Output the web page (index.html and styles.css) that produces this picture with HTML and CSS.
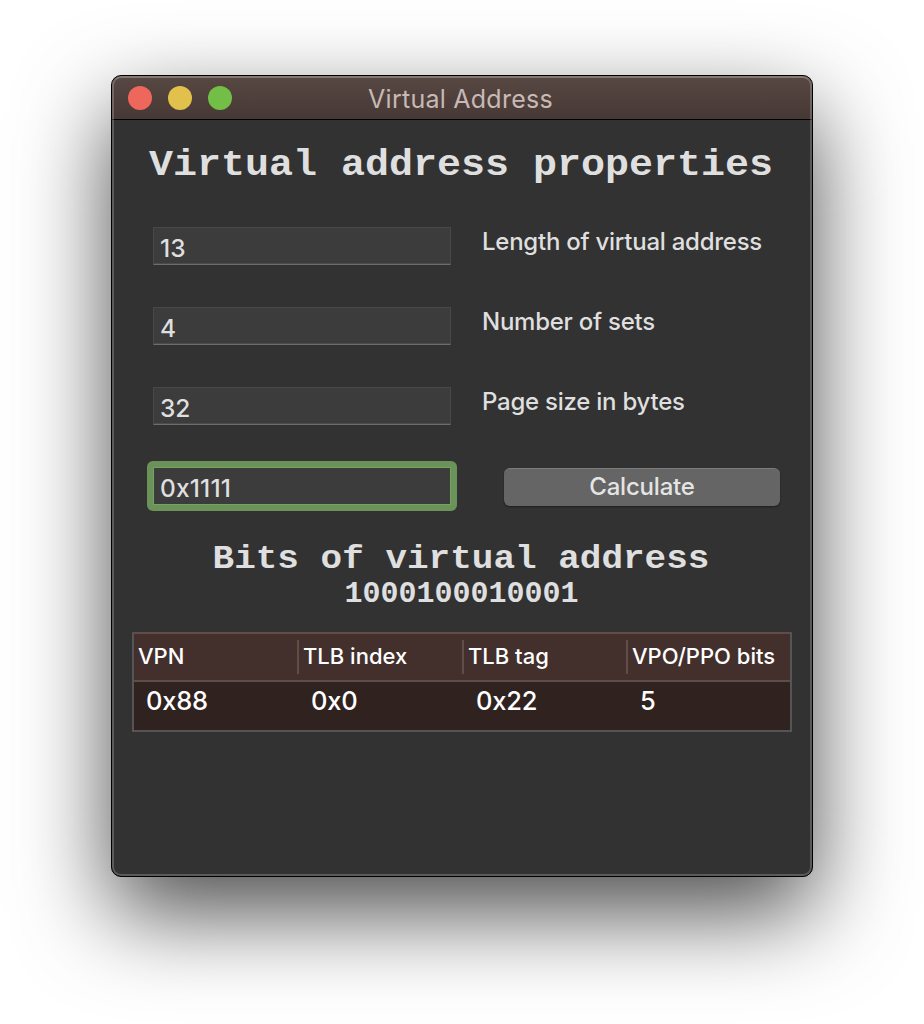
FILE: index.html
```html
<!DOCTYPE html>
<html lang="en">
<head>
<meta charset="utf-8">
<title>Virtual Address</title>
<link rel="stylesheet" href="styles.css">
</head>
<body>
<div class="window">
  <header class="titlebar">
    <div class="lights"><span class="light close"></span><span class="light minimize"></span><span class="light zoom"></span></div>
    <span class="title">Virtual Address</span>
  </header>
  <main class="content">
    <h1 class="heading">Virtual address properties</h1>
    <form class="form">
      <div class="row"><input class="field" type="text" value="13"><label class="label">Length of virtual address</label></div>
      <div class="row"><input class="field" type="text" value="4"><label class="label">Number of sets</label></div>
      <div class="row"><input class="field" type="text" value="32"><label class="label">Page size in bytes</label></div>
      <div class="row"><span class="ring"><input class="field focused" type="text" value="0x1111"></span><button class="button" type="button">Calculate</button></div>
    </form>
    <h2 class="subheading">Bits of virtual address</h2>
    <p class="bits">1000100010001</p>
    <div class="table">
      <div class="thead"><span class="th">VPN</span><span class="th">TLB index</span><span class="th">TLB tag</span><span class="th last">VPO/PPO bits</span></div>
      <div class="tbody"><span class="td">0x88</span><span class="td">0x0</span><span class="td">0x22</span><span class="td">5</span></div>
    </div>
  </main>
</div>
</body>
</html>
```
FILE: styles.css
```css
* { box-sizing: border-box; }
html, body { margin: 0; height: 100%; overflow: hidden; background: #fff; }
body {
  padding: 75px 111px;
  font-family: Inter, "Liberation Sans", sans-serif;
  color: #dfdfdf;
}
.window {
  position: relative;
  width: 702px;
  height: 802px;
  border: 1px solid #000;
  border-radius: 10px;
  background: #323232;
  overflow: hidden;
  box-shadow: 0 36px 92px rgba(0, 0, 0, .7);
}
/* inner rim light drawn over the title bar and body */
.window::after {
  content: "";
  position: absolute;
  inset: 0;
  border: 2px solid rgba(255, 255, 255, .2);
  border-top-color: rgba(255, 255, 255, .27);
  border-radius: 9px;
  pointer-events: none;
}
.titlebar {
  display: grid;
  grid-template-columns: 120px 1fr 120px;
  align-items: center;
  height: 44px;
  padding: 1px 0 0 16px;
  border-bottom: 1px solid #000;
  background: linear-gradient(#584844, #463834);
}
.lights { display: flex; gap: 16px; }
.light { width: 24px; height: 24px; border-radius: 50%; }
.close { background: #ee675c; }
.minimize { background: #e1c04c; }
.zoom { background: #72be47; }
.title {
  text-align: center;
  font-size: 25px;
  line-height: 30px;
  letter-spacing: .25px;
  color: #c7b9b5;
  white-space: nowrap;
  padding: 2px 19px 0 0;
}
.content { padding: 0 20px; }
.heading, .subheading, .bits {
  margin: 0 2px 0 0;
  font-family: "Liberation Mono", monospace;
  font-weight: 700;
  text-align: center;
  white-space: nowrap;
}
/* flattened letterforms keep the wide typewriter proportions */
.heading, .subheading { transform: scaleY(.9); transform-origin: 50% 100%; }
.heading { padding-top: 21px; font-size: 40px; line-height: 46px; }
.form { padding: 40px 0 0 21px; display: grid; grid-auto-rows: 80px; }
.row { display: flex; align-items: flex-start; }
.field {
  display: block;
  width: 298px;
  height: 38px;
  padding: 3px 6px 0;
  border: 1px solid #484848;
  border-bottom: 1px solid #6d6d6d;
  border-radius: 0;
  background: #3c3c3c;
  color: #dfdfdf;
  font: 500 24.5px/32px Inter, sans-serif;
  outline: 0;
  box-shadow: inset 0 -1px #4b4b4b;
}
.ring { margin: -6px; padding: 6px; border-radius: 6px; background: #6b9259; }
.focused { border-color: #72a65c; box-shadow: none; letter-spacing: .15px; }
.label { margin-left: 31px; font-size: 24px; font-weight: 500; letter-spacing: -.25px; line-height: 29px; white-space: nowrap; }
.button {
  width: 276px;
  height: 38px;
  margin: 1px 0 0 53px;
  padding: 0 0 2px;
  border: 0;
  border-radius: 6px;
  border-top: 1px solid #7c7c7c;
  background: #656565;
  color: #e4e4e4;
  font: 500 24px/34px Inter, sans-serif;
  letter-spacing: -.2px;
  box-shadow: 0 1px 2px rgba(0, 0, 0, .4);
}
.subheading { margin-top: -11px; font-size: 36px; line-height: 44px; }
.bits { margin: -1px 1px 0 0; font-size: 30px; line-height: 30px; }
.table {
  width: 660px;
  height: 100px;
  margin-top: 23px;
  border: 2px solid #555;
  border-top-color: #604d47;
  background: #30221f;
  color: #fff;
}
.thead, .tbody { display: grid; grid-template-columns: 165px 165px 164px 1fr; }
.thead { height: 48px; padding-top: 6px; background: #432f2c; border-bottom: 2px solid #604d47; }
.th { height: 34px; padding-left: 4px; border-right: 2px solid #604d47; font-size: 22px; font-weight: 500; line-height: 33px; white-space: nowrap; }
.last { border-right: 0; }
.td { padding-left: 12px; font-size: 25.5px; font-weight: 500; letter-spacing: -.25px; line-height: 38px; }
```
